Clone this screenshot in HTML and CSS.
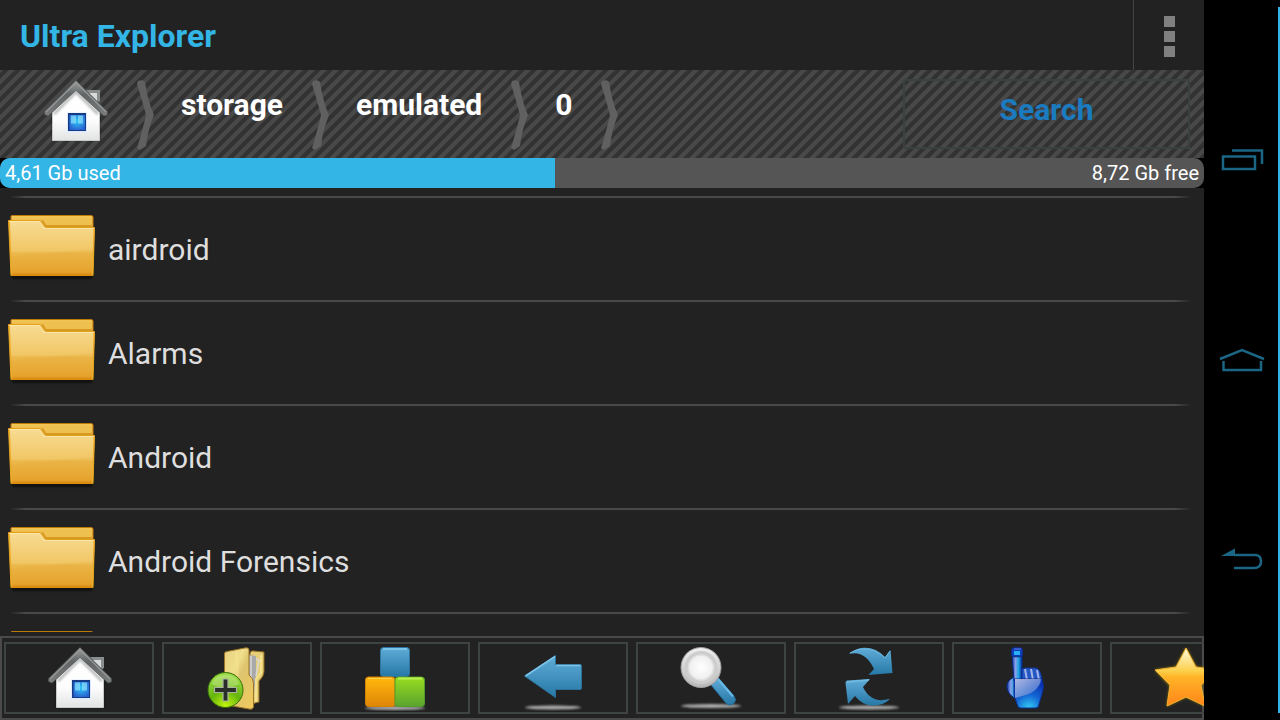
FILE: index.html
```html
<!DOCTYPE html>
<html lang="en">
<head>
<meta charset="utf-8">
<meta name="viewport" content="width=device-width, initial-scale=1">
<title>Ultra Explorer</title>
<link rel="stylesheet" href="styles.css">
</head>
<body>
<svg class="defs" aria-hidden="true">
  <defs>
    <linearGradient id="g-roof" x1="0" y1="0" x2="0" y2="1"><stop offset="0" stop-color="#a0a2a2"/><stop offset=".4" stop-color="#606464"/><stop offset="1" stop-color="#7b7e7e"/></linearGradient>
    <linearGradient id="g-wall" x1="0" y1="0" x2="0" y2="1"><stop offset="0" stop-color="#fff"/><stop offset=".6" stop-color="#fdfdfd"/><stop offset="1" stop-color="#e2e4e3"/></linearGradient>
    <radialGradient id="g-window" cx=".5" cy=".4" r=".65"><stop offset="0" stop-color="#30c8f8"/><stop offset="1" stop-color="#2862d0"/></radialGradient>
    <linearGradient id="g-folder" x1="0" y1="0" x2="0" y2="1"><stop offset="0" stop-color="#f7dc94"/><stop offset=".55" stop-color="#f1c766"/><stop offset=".6" stop-color="#ecb84c"/><stop offset=".93" stop-color="#e7a42e"/><stop offset="1" stop-color="#d9880c"/></linearGradient>
    <linearGradient id="g-blue" x1="0" y1="0" x2="0" y2="1"><stop offset="0" stop-color="#60acd8"/><stop offset="1" stop-color="#2678a6"/></linearGradient>
    <linearGradient id="g-orange" x1="0" y1="0" x2="0" y2="1"><stop offset="0" stop-color="#ffb90c"/><stop offset="1" stop-color="#df8508"/></linearGradient>
    <linearGradient id="g-green" x1="0" y1="0" x2="0" y2="1"><stop offset="0" stop-color="#98de20"/><stop offset="1" stop-color="#5ba32e"/></linearGradient>
    <linearGradient id="g-binder" x1="0" y1="0" x2="1" y2="1"><stop offset="0" stop-color="#e8d080"/><stop offset=".35" stop-color="#f0df8c"/><stop offset=".5" stop-color="#dec46e"/><stop offset="1" stop-color="#f0ca5c"/></linearGradient>
    <radialGradient id="g-plus" cx=".5" cy=".95" r=".9"><stop offset="0" stop-color="#c4f610"/><stop offset=".5" stop-color="#64b40c"/><stop offset="1" stop-color="#9cdc4c"/></radialGradient>
    <linearGradient id="g-ring" x1="0" y1="0" x2="0" y2="1"><stop offset="0" stop-color="#f0f0f0"/><stop offset="1" stop-color="#b8b8b8"/></linearGradient>
    <radialGradient id="g-lens"><stop offset="0" stop-color="#fff"/><stop offset="1" stop-color="#eeeeee"/></radialGradient>
    <linearGradient id="g-finger" x1="0" y1="0" x2="1" y2="0"><stop offset="0" stop-color="#1038a8"/><stop offset=".35" stop-color="#8aa0e8"/><stop offset=".65" stop-color="#1ea6e4"/><stop offset="1" stop-color="#0a2ca0"/></linearGradient>
    <radialGradient id="g-palm" cx=".5" cy="1" r=".9"><stop offset="0" stop-color="#34ccf4"/><stop offset=".5" stop-color="#1468d4"/><stop offset="1" stop-color="#0a34b4"/></radialGradient>
    <linearGradient id="g-shine" x1="0" y1="0" x2="1" y2="1"><stop offset="0" stop-color="#d8daee"/><stop offset="1" stop-color="#3068cc"/></linearGradient>
    <linearGradient id="g-star" x1="0" y1="0" x2="0" y2="1"><stop offset="0" stop-color="#fffce0"/><stop offset=".4" stop-color="#fccf48"/><stop offset=".5" stop-color="#ffb428"/><stop offset="1" stop-color="#ff8418"/></linearGradient>
    <filter id="soft" x="-20%" y="-100%" width="140%" height="300%"><feGaussianBlur stdDeviation="1"/></filter>
    <filter id="glow" x="-20%" y="-20%" width="140%" height="140%"><feGaussianBlur stdDeviation="1.5"/></filter>
    <filter id="chev-soft"><feGaussianBlur stdDeviation=".7"/></filter>

    <symbol id="house" viewBox="0 0 64 64">
      <path d="M42 10h14v11l-3 2-9-9z" fill="#8a8d8d"/><path d="M45 13h8v13z" fill="#d8dada"/>
      <path d="M8 34 32 8 56 34V60H8Z" fill="#111" opacity=".5" filter="url(#soft)"/>
      <path d="M8.500 32 32 9 55.500 32V60.500H8.500Z" fill="url(#g-wall)" stroke="#c8caca"/>
      <path d="M10 34 32 12 54 34" fill="none" stroke="#8c8e8e" stroke-width="3" opacity=".6" filter="url(#soft)"/>
      <path d="M.5 31.500 32 .5 63.500 31.500V35L60 36 32 10.500 4 36 .5 34.500Z" fill="url(#g-roof)" stroke="#4b4e4e" stroke-width=".6"/>
      <path d="M2 32 32 2.500 62 32" fill="none" stroke="#999" stroke-width="1.200"/>
      <path d="M23 32.500h20v20H23z" fill="#dceaff"/><path d="M24 33h18v18H24z" fill="#173b85"/>
      <path d="M25.500 35h15.500v15H25.500z" fill="url(#g-window)"/><path d="M27 35.500h5v8H27zM34 35.500h5v8h-5z" fill="#9eecff" opacity=".6"/>
    </symbol>

    <symbol id="folder" viewBox="0 0 90 66">
      <path d="M4 58H84V64H4Z" fill="#000" opacity=".5" filter="url(#soft)"/>
      <path d="M3 1.500Q3 .5 4 .5H83Q85 .5 85 2V20H3Z" fill="#efc050" stroke="#be7a08"/>
      <path d="M4 2H84" stroke="#f5c858"/><path d="M34 5.500 38 11H84" fill="none" stroke="#d99a22" stroke-width="2"/>
      <path d="M.5 5.500H31Q33 5.500 34 8L36 11Q37 12.500 39 12.500H86.500L85 60.500H3Z" fill="url(#g-folder)" stroke="#e0a01b"/>
      <path d="M2 6.500H31Q32 6.500 35 12 36 13.500 38 13.500H85" fill="none" stroke="#fbe7a8"/>
      <path d="M2 41Q45 38 85 34V59H3Z" fill="#e8a42c" opacity=".2"/>
      <path d="M3 60H85" stroke="#d98208"/>
      <path d="M1.500 7 3.500 60M86 14 84.500 60" stroke="#efae28"/>
    </symbol>

    <symbol id="addfolder" viewBox="-2 0 64 64">
      <path d="M42 6Q43 3 46 4L56 5V25Q56 29 51 34V55L40 58Z" fill="#e6cd78" stroke="#8e681d"/>
      <path d="M41 8 48 9V28L45 57 40 58Z" fill="#a9a9a9"/><path d="M43 9V57M48 12 51 13 48 29" fill="none" stroke="#d8d8d8" stroke-width="1.500"/>
      <path d="M53 8V26L48 32V55" fill="none" stroke="#f6e18c" stroke-width="2"/>
      <path d="M16.500 7Q16 5 19 4.500L38 .8Q41 .5 41 3V28Q45 31 45.500 36V60Q45 63 41 62L19 58Q16.500 57 16.500 54Z" fill="url(#g-binder)" stroke="#9c7428"/>
      <path d="M28 5Q31 30 27 57" fill="none" stroke="#fff1a2" opacity=".5"/>
      <circle cx="17.500" cy="43" r="17.500" fill="url(#g-plus)" stroke="#386c08"/>
      <path d="M4 37Q7 28 17.500 28 28 28 31 37 24 41 17.500 41 10 41 4 37Z" fill="#cbea94" opacity=".45"/>
      <path d="M15 32h5v8.500h8.500v5H20V54h-5v-8.500H6.500v-5H15z" fill="#292e28" stroke="#acb3a0" stroke-width="1.200"/>
    </symbol>

    <symbol id="blocks" viewBox="0 0 64 64">
      <ellipse cx="31" cy="61" rx="30" ry="2" fill="#aaa" filter="url(#soft)"/>
      <rect x="16.500" y=".5" width="29" height="29" rx="3" fill="url(#g-blue)" stroke="#2d759e"/>
      <rect x="1.500" y="30" width="29.500" height="29.500" rx="3" fill="url(#g-orange)" stroke="#d28206"/>
      <rect x="31" y="30" width="29.500" height="29.500" rx="3" fill="url(#g-green)" stroke="#559b2b"/>
      <path d="M19 2H43" stroke="#78c4eb" stroke-width="2"/><path d="M4 31.500H28" stroke="#ffd150" stroke-width="1"/><path d="M34 31.500H58" stroke="#b9f052" stroke-width="2"/>
    </symbol>

    <symbol id="back" viewBox="0 0 64 64">
      <ellipse cx="31" cy="60.500" rx="28" ry="2" fill="#aaa" filter="url(#soft)"/>
      <path d="M2.500 29 33.500 8.500V17.500H58Q59.500 17.500 59.500 19V41Q59.500 42.500 58 42.500H33.500V50.500Z" fill="url(#g-blue)" stroke="#2a7099"/>
      <path d="M3.500 29 33 9.500M34 18.500H58.500" fill="none" stroke="#7dc3e8" stroke-width="1.500"/>
    </symbol>

    <symbol id="search" viewBox="0 1 64 64">
      <ellipse cx="31" cy="60" rx="30" ry="2" fill="#aaa" filter="url(#soft)"/>
      <path d="M32 36 38 31.500 54 50Q57 54 54 57 50 61 46 57L31 39Z" fill="url(#g-blue)" stroke="#246d99"/>
      <path d="M38 33 53 50.500" stroke="#6ab8e4" stroke-width="2"/>
      <circle cx="21" cy="21.500" r="20" fill="url(#g-ring)" stroke="#9e9e9e"/><circle cx="21" cy="21.500" r="16.500" fill="#cdcdcd"/>
      <circle cx="21" cy="21.500" r="12.500" fill="url(#g-lens)" stroke="#e0e0e0" stroke-width="1.500"/>
    </symbol>

    <symbol id="refresh" viewBox="0 0 64 64">
      <ellipse cx="31" cy="60.500" rx="30" ry="2" fill="#aaa" filter="url(#soft)"/>
      <path d="M10 8Q17 1 26 .8 38 .5 47 10L52.500 3 54.500 26 30.500 28 36 22Q27 3 11 7Z" fill="url(#g-blue)"/>
      <path d="M12 6Q24-1 37 4 43 7 47 11L52 4" fill="none" stroke="#6ab7e0"/>
      <path d="M52 52Q45 59 34 58.500 24 58 17 49L10 57 7.500 36Q7.500 34 9 33.500L32 32 25 40Q33 57 51 52Z" fill="url(#g-blue)"/>
      <path d="M9 35 31 33" stroke="#71bde4" stroke-width="1.500"/>
    </symbol>

    <symbol id="hand" viewBox="0 0 64 64">
      <path d="M18 30Q10 34 11 41 13 50 22 52V30Z" fill="url(#g-finger)" stroke="#092a8a"/>
      <path d="M16 8H26V34H18Z" fill="url(#g-finger)" stroke="#092a8a"/>
      <rect x="15.500" y=".8" width="11" height="9" rx="2.500" fill="#0c3cbc" stroke="#112b85"/><rect x="18" y="4" width="6" height="4" fill="#28b0f4"/><path d="M18 2H25" stroke="#6380e8"/>
      <path d="M26 23Q26 21 30 21H40Q45 22 46 34H26Z" fill="#2458c4" stroke="#103394"/>
      <path d="M29 22 31 33M35 22 37 33M41 23 43 33" stroke="#a4b4e8" stroke-width="2"/>
      <path d="M18 32H46Q49 40 46 47L43 57Q43 61 40 61H24Q22 61 21 57L18 48Z" fill="url(#g-palm)" stroke="#0c2c90"/>
      <path d="M19 32H45Q44 43 30 48L19 51Z" fill="url(#g-shine)" opacity=".8"/>
    </symbol>

    <symbol id="star" viewBox="0 0 64 64">
      <path d="M32 1 42 20 63 23 47 39 51 59 32 50 13 59 16 39 1 23 22 20Z" fill="#b79600" filter="url(#glow)"/>
      <path d="M32 1 42 20 63 23 47 38 51 59 32 50 13 59 16 38 1 23 22 20Z" fill="url(#g-star)" stroke="#f2b032" stroke-linejoin="round"/>
    </symbol>

    <symbol id="chevron" viewBox="0 0 18 72">
      <path d="M1 2Q6 0 8 3 11 23 17 36 11 50 9 67L3 71 0 69Q6 50 9 36 5 21 0 5Z" fill="#606060" filter="url(#chev-soft)"/>
    </symbol>
  </defs>
</svg>

<div class="screen">
  <div class="app">
    <header class="title-bar">
      <h1 class="title">Ultra Explorer</h1>
      <button class="overflow" type="button" aria-label="More options"><i class="dot"></i><i class="dot"></i><i class="dot"></i></button>
    </header>

    <div class="path-bar">
      <nav class="crumbs" aria-label="Path">
        <a class="crumb-home" href="#" aria-label="Home"><svg class="icon"><use href="#house"/></svg></a>
        <svg class="chevron" aria-hidden="true"><use href="#chevron"/></svg>
        <a class="crumb" href="#">storage</a>
        <svg class="chevron" aria-hidden="true"><use href="#chevron"/></svg>
        <a class="crumb" href="#">emulated</a>
        <svg class="chevron" aria-hidden="true"><use href="#chevron"/></svg>
        <a class="crumb" href="#">0</a>
        <svg class="chevron" aria-hidden="true"><use href="#chevron"/></svg>
      </nav>
      <button class="search" type="button">Search</button>
    </div>

    <div class="usage-wrap">
      <div class="usage">
        <div class="used" style="width:46.100%">4,61 Gb used</div>
        <div class="free">8,72 Gb free</div>
      </div>
    </div>

    <main class="files">
      <ul class="list">
        <li class="row"><svg class="folder" aria-hidden="true"><use href="#folder"/></svg><a class="name" href="#">airdroid</a></li>
        <li class="row"><svg class="folder" aria-hidden="true"><use href="#folder"/></svg><a class="name" href="#">Alarms</a></li>
        <li class="row"><svg class="folder" aria-hidden="true"><use href="#folder"/></svg><a class="name" href="#">Android</a></li>
        <li class="row"><svg class="folder" aria-hidden="true"><use href="#folder"/></svg><a class="name" href="#">Android Forensics</a></li>
        <li class="row"><svg class="folder" aria-hidden="true"><use href="#folder"/></svg></li>
      </ul>
    </main>

    <div class="toolbar" role="toolbar" aria-label="Actions">
      <button class="tool" type="button" aria-label="Home"><svg class="icon"><use href="#house"/></svg></button>
      <button class="tool" type="button" aria-label="New folder"><svg class="icon"><use href="#addfolder"/></svg></button>
      <button class="tool" type="button" aria-label="Applications"><svg class="icon"><use href="#blocks"/></svg></button>
      <button class="tool" type="button" aria-label="Back"><svg class="icon"><use href="#back"/></svg></button>
      <button class="tool" type="button" aria-label="Find"><svg class="icon"><use href="#search"/></svg></button>
      <button class="tool" type="button" aria-label="Refresh"><svg class="icon"><use href="#refresh"/></svg></button>
      <button class="tool" type="button" aria-label="Select"><svg class="icon"><use href="#hand"/></svg></button>
      <button class="tool" type="button" aria-label="Favorites"><svg class="icon"><use href="#star"/></svg></button>
    </div>
  </div>

  <nav class="system" aria-label="System">
    <button class="sys" type="button" aria-label="Recent apps"><svg class="sys-icon" viewBox="0 0 48 32"><path d="M5 12.500H37V25H5ZM14 6.500H44V20" /></svg></button>
    <button class="sys" type="button" aria-label="Home"><svg class="sys-icon" viewBox="0 0 48 32"><path d="M2 15 24 6 46 15M5.500 17V26H43V17" /></svg></button>
    <button class="sys" type="button" aria-label="Back"><svg class="sys-icon" viewBox="0 0 48 32"><path d="M16 11H37Q43 11 43 17.500 43 24 36 24H16"/><path class="solid" d="M3 12 17 4.500V12Z"/></svg></button>
  </nav>
</div>
</body>
</html>
```

FILE: styles.css
```css
* { box-sizing: border-box; }

body {
  margin: 0;
  background: #000;
  color: #fff;
  font-family: Roboto, "Open Sans", sans-serif;
}

button {
  margin: 0;
  padding: 0;
  border: 0;
  background: none;
  color: inherit;
  font: inherit;
}

a { color: inherit; text-decoration: none; }

svg { display: block; }

.defs { position: absolute; width: 0; height: 0; }

.screen { display: flex; height: 100vh; }

.app {
  flex: 1;
  min-width: 0;
  display: flex;
  flex-direction: column;
  background: #222;
}

.title-bar {
  display: flex;
  align-items: stretch;
  justify-content: space-between;
  height: 70px;
  padding-left: 20px;
}

.title {
  margin: 0;
  color: #33b5e5;
  font-size: 32px;
  font-weight: 700;
  line-height: 72px;
}

.overflow {
  width: 71px;
  padding-top: 2px;
  padding-left: 1px;
  border-left: 1px solid #444;
  display: flex;
  flex-direction: column;
  align-items: center;
  justify-content: center;
  gap: 4px;
}

.dot { width: 11px; height: 11px; background: #808080; }

.path-bar {
  display: flex;
  justify-content: space-between;
  height: 88px;
  padding: 9px 14px 9px 44px;
  background: linear-gradient(135deg, #494949 0 10%, #323232 15% 35%, #494949 40% 60%, #323232 65% 85%, #494949 90%) 0 0 / 12px 12px;
}

.crumbs { display: flex; }

.crumb-home { padding-top: 1px; margin-right: 29px; }

.icon { width: 64px; height: 64px; }

.chevron { width: 18px; height: 72px; }

.crumb {
  padding: 0 29px 0 26px;
  font-size: 30px;
  font-weight: 700;
  line-height: 52px;
}

.search {
  width: 287px;
  height: 70px;
  padding-bottom: 10px;
  border: 2px solid #3a4240;
  color: #1a7bc0;
  font-size: 30px;
  font-weight: 700;
}

.usage-wrap { background: #000; }

.usage {
  display: flex;
  height: 30px;
  border-radius: 10px;
  overflow: hidden;
  background: #555;
  font-size: 20px;
  line-height: 30px;
}

.used { padding-left: 5px; background: #33b5e5; }

.free { flex: 1; padding-right: 5px; text-align: right; }

.files {
  flex: 1;
  min-height: 0;
  margin-bottom: 4px;
  padding-top: 8px;
  overflow: hidden;
}

.list { margin: 0; padding: 0; list-style: none; }

.row {
  display: flex;
  height: 104px;
  padding: 19px 8px 0;
  gap: 10px;
  background: linear-gradient(90deg, transparent 10px, #4a4a4a 26px calc(100% - 30px), transparent calc(100% - 12px)) top / 100% 2px no-repeat;
}

.folder { width: 90px; height: 66px; }

.name { font-size: 30px; line-height: 70px; color: #dedede; }

.toolbar {
  display: flex;
  gap: 8px;
  height: 84px;
  padding: 6px 4px;
  box-shadow: inset 0 0 0 2px #4a4a4a;
  overflow: hidden;
}

.tool {
  flex: none;
  width: 150px;
  height: 72px;
  padding: 2px 0 0 2px;
  border: 2px solid #3d4442;
  display: flex;
  align-items: center;
  justify-content: center;
}

.system {
  width: 76px;
  display: flex;
  flex-direction: column;
  align-items: center;
  justify-content: center;
  gap: 136px;
  background: linear-gradient(#33b5e5, #33b5e5) right / 2px calc(100% - 14px) no-repeat #000;
}

.sys { height: 64px; }

.sys-icon {
  width: 48px;
  height: 32px;
  fill: none;
  stroke: #1b6684;
  stroke-width: 2.500;
}

.solid { fill: #1b6684; stroke: none; }
```
